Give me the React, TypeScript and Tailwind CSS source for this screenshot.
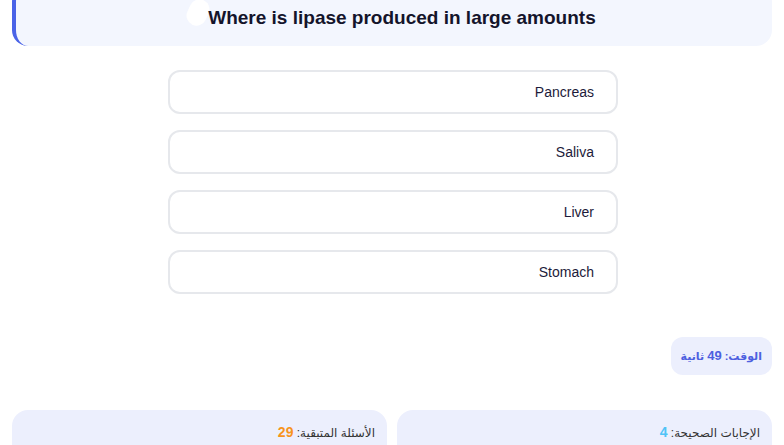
import React from 'react'

const options = ['Pancreas', 'Saliva', 'Liver', 'Stomach']

export default function App() {
  return (
    <div dir="rtl" className="min-h-screen bg-white px-3 overflow-hidden" style={{ fontFamily: '"Liberation Sans", "DejaVu Sans", Arial, sans-serif' }}>
      <div dir="ltr" className="relative -mt-[14px] h-[60px] flex items-center justify-center rounded-2xl border-l-4 border-[#4a63e7] bg-[#f3f6fe] pl-4 pt-1">
        <div className="absolute left-[172px] top-[13px] h-[27px] w-[20px] rotate-[25deg] rounded-full bg-white" />
        <h1 className="relative text-[19px] font-bold text-[#14142b]">Where is lipase produced in large amounts</h1>
      </div>

      <div className="mx-auto mt-6 flex w-[450px] translate-x-[1px] flex-col gap-4">
        {options.map(o => (
          <button key={o} className="h-[44px] rounded-xl border-2 border-[#e6e8ec] bg-white pr-[22px] text-right text-[14px] text-[#1d1b3a]">
            {o}
          </button>
        ))}
      </div>

      <div className="mt-[43px] flex">
        <div className="rounded-xl bg-[#eceffd] px-[10px] py-[11px] text-[11px] leading-[16px] font-bold text-[#4d5fe0]">
          الوقت: <span className="text-[13px]">49</span> ثانية
        </div>
      </div>

      <div className="mt-[35px] grid grid-cols-2 gap-[10px]">
        <div className="h-[80px] rounded-2xl bg-[#eceffd] px-3 pt-[12px] text-[12px] text-[#333]">
          الإجابات الصحيحة: <span className="text-[14px] font-bold text-[#4fc3f7]">4</span>
        </div>
        <div className="h-[80px] rounded-2xl bg-[#eceffd] px-3 pt-[12px] text-[12px] text-[#333]">
          الأسئلة المتبقية: <span className="text-[14px] font-bold text-[#f7941d]">29</span>
        </div>
      </div>
    </div>
  )
}
